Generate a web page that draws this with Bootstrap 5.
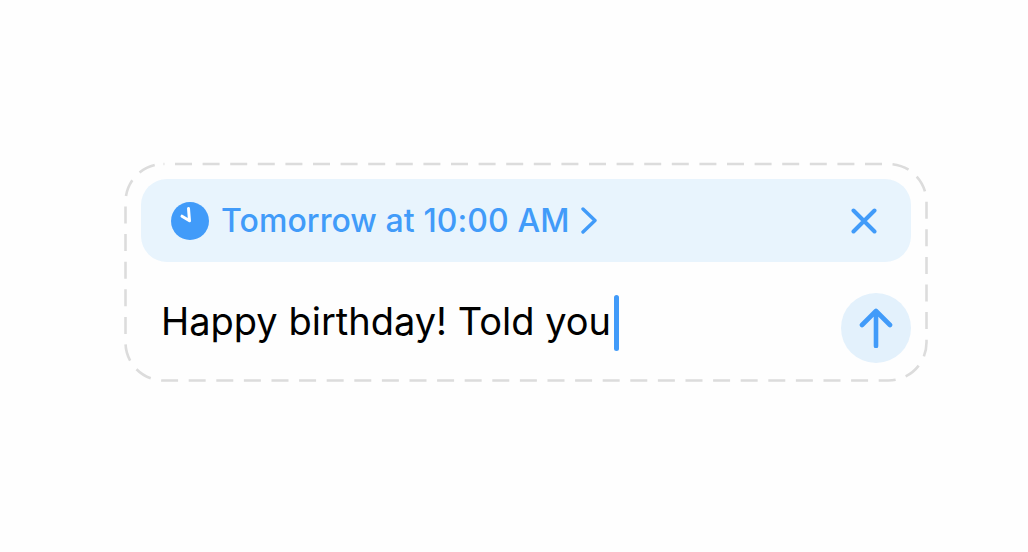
<!DOCTYPE html>
<html lang="en">
<head>
<meta charset="utf-8">
<title>Scheduled message</title>
<link href="https://cdn.jsdelivr.net/npm/bootstrap@5.3.0/dist/css/bootstrap.min.css" rel="stylesheet">
<style>
html, body { height: 100%; background: #fefefe; overflow: hidden; }
.stage { height: 552px; padding-left: 126px; padding-top: 164px; font-family: Inter, "Liberation Sans", sans-serif; }
.composer { width: 800px; height: 217px; padding: 15px; }
.dash-frame { top: 0; left: 0; }
.sched-bar { height: 83px; background: #e8f4fd; border-radius: 26px; padding: 0 34px 0 30px; color: #419bf9; }
.sched-text { font-size: 32px; font-weight: 500; letter-spacing: 0.08px; margin-left: 12px; line-height: 1; }
.chev { margin-left: 12px; }
.close-ic { margin-left: auto; }
.input-row { padding: 30px 0 0 20px; }
.msg-text { font-size: 38px; line-height: 58px; color: #000; }
.caret-bar { width: 5px; height: 56px; background: #419bf9; border-radius: 3px; margin: 3px 0 0 3px; }
.send-btn { width: 70px; height: 70px; background: #e3f1fc; margin: 1px 0 0 auto; }
</style>
</head>
<body>
<div class="stage">
  <div class="composer position-relative">
    <svg class="dash-frame position-absolute overflow-visible" width="800" height="217" viewBox="0 0 800 217" fill="none">
      <rect x="-0.5" y="0" width="801" height="216.5" rx="38" stroke="#dcdcdc" stroke-width="2.6" stroke-dasharray="17 10.6" stroke-dashoffset="-11.5"/>
    </svg>
    <div class="sched-bar d-flex align-items-center position-relative">
      <svg width="38" height="38" viewBox="0 0 38 38">
        <circle cx="19" cy="19" r="19" fill="#419bf9"/>
        <path d="M17.5 6.5L18.5 18.8 11 14.2" fill="none" stroke="#fff" stroke-width="3" stroke-linecap="round" stroke-linejoin="round"/>
      </svg>
      <span class="sched-text">Tomorrow at 10:00 AM</span>
      <svg class="chev" width="16" height="27" viewBox="0 0 16 27" fill="none">
        <path d="M2 2l12 11.5L2 25" stroke="#419bf9" stroke-width="3.4" stroke-linecap="round" stroke-linejoin="round"/>
      </svg>
      <svg class="close-ic" width="26" height="26" viewBox="0 0 26 26" fill="none">
        <path d="M2.5 2.5l21 21M23.5 2.5l-21 21" stroke="#419bf9" stroke-width="4" stroke-linecap="round"/>
      </svg>
    </div>
    <div class="input-row d-flex align-items-start position-relative">
      <span class="msg-text">Happy birthday! Told you</span>
      <span class="caret-bar"></span>
      <span class="send-btn rounded-circle d-flex align-items-center justify-content-center">
        <svg width="34" height="40" viewBox="0 0 34 40" fill="none">
          <path d="M17 38V3M3 17L17 3l14 14" stroke="#419bf9" stroke-width="4.6" stroke-linecap="round" stroke-linejoin="round"/>
        </svg>
      </span>
    </div>
  </div>
</div>
<script src="https://cdn.jsdelivr.net/npm/bootstrap@5.3.0/dist/js/bootstrap.bundle.min.js"></script>
</body>
</html>
